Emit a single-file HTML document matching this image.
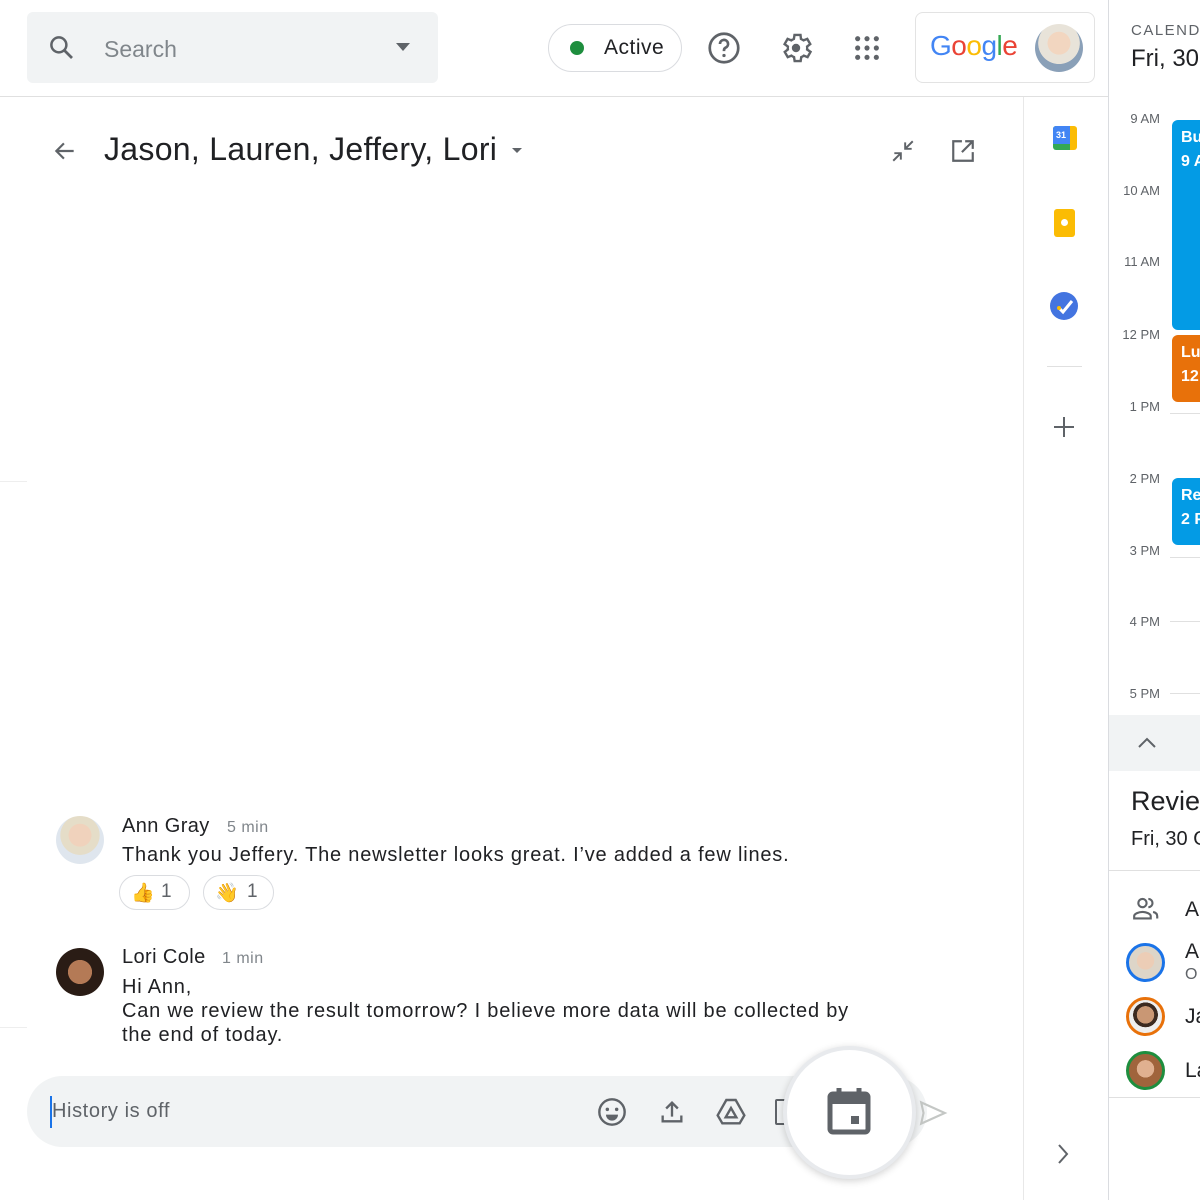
<!DOCTYPE html>
<html><head><meta charset="utf-8"><style>
*{margin:0;padding:0;box-sizing:border-box}
body{width:1200px;height:1200px;overflow:hidden;background:#fff;font-family:"Liberation Sans",Arial,sans-serif;color:#202124;position:relative}
.a{position:absolute}
.t{position:absolute;white-space:nowrap}
.tm{font-size:13px;color:#5f6368;text-align:right;width:60px;left:1100px}
.ev{position:absolute;left:1172px;width:40px;border-radius:6px;color:#fff;font-size:16px;padding:6px 0 0 9px;line-height:24px;font-weight:bold}
.hl{position:absolute;left:1170px;width:30px;height:1px;background:#e0e0e0}
.av{position:absolute;border-radius:50%;overflow:hidden}
.msg{letter-spacing:0.8px}
</style></head><body>
<!-- top bar -->
<div class="a" style="left:27px;top:12px;width:411px;height:71px;background:#f1f3f4;border-radius:6px"></div>
<svg class="a" style="left:47px;top:33px" width="30" height="30" viewBox="0 0 24 24"><circle cx="9.5" cy="9.5" r="6" fill="none" stroke="#5f6368" stroke-width="2"/><path d="M14 14l6 6" stroke="#5f6368" stroke-width="2.2"/></svg>
<div class="t" style="left:104px;top:36px;font-size:23px;color:#80868b">Search</div>
<svg class="a" style="left:395px;top:42px" width="16" height="10"><path d="M1 1h14L8 9z" fill="#5f6368"/></svg>
<div class="a" style="left:548px;top:24px;width:134px;height:48px;border:1px solid #dadce0;border-radius:24px"></div>
<div class="a" style="left:570px;top:41px;width:14px;height:14px;border-radius:50%;background:#1e8e3e"></div>
<div class="t" style="left:604px;top:36px;font-size:21px;color:#202124;letter-spacing:0.5px">Active</div>
<svg class="a" style="left:706px;top:30px" width="36" height="36" viewBox="0 0 24 24"><circle cx="12" cy="12" r="9.5" fill="none" stroke="#5f6368" stroke-width="1.8"/><path d="M9.3 9.3a2.7 2.7 0 1 1 3.7 2.5c-.7.4-1 .9-1 1.7v.6" fill="none" stroke="#5f6368" stroke-width="1.8"/><circle cx="12" cy="17" r="1.1" fill="#5f6368"/></svg>
<svg class="a" style="left:778px;top:30px" width="36" height="36" viewBox="0 0 24 24"><path fill="none" stroke="#5f6368" stroke-width="1.6" d="M19.4 13a7.5 7.5 0 0 0 0-2l2.1-1.6-2-3.5-2.5 1a7 7 0 0 0-1.7-1L15 3.3h-4l-.4 2.6a7 7 0 0 0-1.7 1l-2.5-1-2 3.5L6.6 11a7.5 7.5 0 0 0 0 2l-2.1 1.6 2 3.5 2.5-1a7 7 0 0 0 1.7 1l.4 2.6h4l.4-2.6a7 7 0 0 0 1.7-1l2.5 1 2-3.5z"/><circle cx="12" cy="12" r="2.8" fill="#5f6368"/></svg>
<svg class="a" style="left:853px;top:34px" width="28" height="28" viewBox="0 0 24 24" fill="#5f6368"><circle cx="4" cy="4" r="2.2"/><circle cx="12" cy="4" r="2.2"/><circle cx="20" cy="4" r="2.2"/><circle cx="4" cy="12" r="2.2"/><circle cx="12" cy="12" r="2.2"/><circle cx="20" cy="12" r="2.2"/><circle cx="4" cy="20" r="2.2"/><circle cx="12" cy="20" r="2.2"/><circle cx="20" cy="20" r="2.2"/></svg>
<div class="a" style="left:915px;top:12px;width:180px;height:71px;border:1px solid #e3e3e3;border-radius:8px"></div>
<div class="t" style="left:930px;top:30px;font-size:28px;letter-spacing:-0.5px"><span style="color:#4285f4">G</span><span style="color:#ea4335">o</span><span style="color:#fbbc05">o</span><span style="color:#4285f4">g</span><span style="color:#34a853">l</span><span style="color:#ea4335">e</span></div>
<div class="av" style="left:1035px;top:24px;width:48px;height:48px;background:radial-gradient(circle at 50% 40%,#f2d6c0 0 30%,#e8e3d9 31% 55%,#8aa0b8 56%)"></div>
<div class="a" style="left:0;top:96px;width:1108px;height:1px;background:#e0e0e0"></div>
<div class="a" style="left:1108px;top:0;width:1px;height:1200px;background:#dadce0"></div>
<div class="a" style="left:1023px;top:97px;width:1px;height:1103px;background:#e8e8e8"></div>
<div class="a" style="left:0;top:481px;width:27px;height:1px;background:#eee"></div>
<div class="a" style="left:0;top:1027px;width:27px;height:1px;background:#eee"></div>
<!-- header -->
<svg class="a" style="left:52px;top:138px" width="26" height="26" viewBox="0 0 24 24"><path d="M20 12H5M11 5l-7 7 7 7" fill="none" stroke="#5f6368" stroke-width="2"/></svg>
<div class="t" style="left:104px;top:131px;font-size:32px;color:#202124;letter-spacing:0.3px">Jason, Lauren, Jeffery, Lori</div>
<svg class="a" style="left:511px;top:147px" width="12" height="7"><path d="M1 1h10L6 6z" fill="#5f6368"/></svg>
<svg class="a" style="left:890px;top:138px" width="26" height="26" viewBox="0 0 24 24"><path d="M3 21l7-7M4 14h6v6M21 3l-7 7M14 4v6h6" fill="none" stroke="#5f6368" stroke-width="1.8"/></svg>
<svg class="a" style="left:950px;top:138px" width="26" height="26" viewBox="0 0 24 24"><path d="M11 3H3v18h18v-8M14 3h7v7M21 3l-10 10" fill="none" stroke="#5f6368" stroke-width="2"/></svg>
<!-- side rail -->
<div class="a" style="left:1053px;top:126px;width:24px;height:24px;border-radius:3px;background:linear-gradient(90deg,#34a853 0 70%,#fbbc05 70%)"></div>
<div class="a" style="left:1053px;top:126px;width:17px;height:18px;background:#4285f4;border-radius:3px 0 0 0"></div>
<div class="t" style="left:1056px;top:130px;font-size:9px;color:#fff;font-weight:bold">31</div>
<div class="a" style="left:1054px;top:209px;width:21px;height:28px;background:#fbbc04;border-radius:3px"></div>
<div class="a" style="left:1061px;top:219px;width:7px;height:7px;border-radius:50%;background:#fff"></div>
<div class="a" style="left:1050px;top:292px;width:28px;height:28px;border-radius:50%;background:#4374e0"></div>
<svg class="a" style="left:1050px;top:292px" width="28" height="28"><path d="M9 16l4 4 9-11" fill="none" stroke="#fff" stroke-width="3"/><circle cx="9" cy="16" r="2" fill="#fbbc04"/></svg>
<div class="a" style="left:1047px;top:366px;width:35px;height:1px;background:#e0e0e0"></div>
<svg class="a" style="left:1053px;top:416px" width="22" height="22"><path d="M11 1v20M1 11h20" stroke="#5f6368" stroke-width="2"/></svg>
<svg class="a" style="left:1056px;top:1143px" width="14" height="22"><path d="M3 2l8 9-8 9" fill="none" stroke="#5f6368" stroke-width="2"/></svg>
<!-- calendar -->
<div class="t" style="left:1131px;top:22px;font-size:15px;letter-spacing:1.5px;color:#5f6368">CALENDAR</div>
<div class="t" style="left:1131px;top:45px;font-size:24px;color:#202124">Fri, 30 Oct</div>
<div class="t tm" style="top:111px">9 AM</div>
<div class="t tm" style="top:183px">10 AM</div>
<div class="t tm" style="top:254px">11 AM</div>
<div class="t tm" style="top:327px">12 PM</div>
<div class="t tm" style="top:399px">1 PM</div>
<div class="t tm" style="top:471px">2 PM</div>
<div class="t tm" style="top:543px">3 PM</div>
<div class="t tm" style="top:614px">4 PM</div>
<div class="t tm" style="top:686px">5 PM</div>
<div class="hl" style="top:621px"></div><div class="hl" style="top:693px"></div><div class="hl" style="top:413px"></div><div class="hl" style="top:557px"></div>
<div class="ev" style="top:120px;height:210px;background:#039be5">Bu<br>9 A</div>
<div class="ev" style="top:335px;height:67px;background:#e8710a">Lu<br>12</div>
<div class="ev" style="top:478px;height:67px;background:#039be5">Re<br>2 P</div>
<div class="a" style="left:1109px;top:715px;width:91px;height:56px;background:#f1f3f4"></div>
<svg class="a" style="left:1137px;top:736px" width="20" height="14"><path d="M2 11l8-8 8 8" fill="none" stroke="#5f6368" stroke-width="2"/></svg>
<div class="t" style="left:1131px;top:786px;font-size:27px">Review</div>
<div class="t" style="left:1131px;top:828px;font-size:20px">Fri, 30 Oct</div>
<div class="a" style="left:1109px;top:870px;width:91px;height:1px;background:#e0e0e0"></div>
<svg class="a" style="left:1131px;top:896px" width="30" height="26" viewBox="0 0 24 22"><circle cx="9" cy="6" r="3.5" fill="none" stroke="#5f6368" stroke-width="1.8"/><path d="M2 19v-2c0-2 4-3.5 7-3.5s7 1.5 7 3.5v2z" fill="none" stroke="#5f6368" stroke-width="1.8"/><path d="M14 2.5a3.5 3.5 0 0 1 0 7M18 13.5c2 .5 3.5 1.5 3.5 3.5v2" fill="none" stroke="#5f6368" stroke-width="1.8"/></svg>
<div class="t" style="left:1185px;top:898px;font-size:21px">A</div>
<div class="av" style="left:1126px;top:943px;width:39px;height:39px;border:3px solid #1a73e8;background:radial-gradient(circle at 50% 45%,#eccdb6 0 35%,#ddd5c8 36%)"></div>
<div class="t" style="left:1185px;top:940px;font-size:21px">A</div>
<div class="t" style="left:1185px;top:966px;font-size:16px;color:#5f6368">O</div>
<div class="av" style="left:1126px;top:997px;width:39px;height:39px;border:3px solid #e8710a;background:radial-gradient(circle at 50% 45%,#c99774 0 35%,#3c2a20 36% 50%,#eee 51%)"></div>
<div class="t" style="left:1185px;top:1005px;font-size:21px">Ja</div>
<div class="av" style="left:1126px;top:1051px;width:39px;height:39px;border:3px solid #1e8e3e;background:radial-gradient(circle at 50% 45%,#e0b090 0 35%,#a0643c 36%)"></div>
<div class="t" style="left:1185px;top:1059px;font-size:21px">La</div>
<div class="a" style="left:1109px;top:1097px;width:91px;height:1px;background:#e0e0e0"></div>
<!-- messages -->
<div class="av" style="left:56px;top:816px;width:48px;height:48px;background:radial-gradient(circle at 50% 40%,#f0d2bc 0 30%,#e5ddc8 31% 52%,#dfe6ee 53%)"></div>
<div class="t msg" style="left:122px;top:815px;font-size:20px;letter-spacing:0.4px">Ann Gray</div>
<div class="t" style="left:227px;top:819px;font-size:16px;color:#80868b;letter-spacing:0.5px">5 min</div>
<div class="t msg" style="left:122px;top:844px;font-size:20px;color:#202124">Thank you Jeffery. The newsletter looks great. I’ve added a few lines.</div>
<div class="a" style="left:119px;top:875px;width:71px;height:35px;border:1px solid #dadce0;border-radius:18px"></div>
<div class="t" style="left:131px;top:881px;font-size:19px;color:#f4b400">👍</div><div class="t" style="left:161px;top:881px;font-size:19px;color:#5f6368">1</div>
<div class="a" style="left:203px;top:875px;width:71px;height:35px;border:1px solid #dadce0;border-radius:18px"></div>
<div class="t" style="left:215px;top:881px;font-size:19px;color:#5d4037">👋</div><div class="t" style="left:247px;top:881px;font-size:19px;color:#5f6368">1</div>
<div class="av" style="left:56px;top:948px;width:48px;height:48px;background:radial-gradient(circle at 50% 50%,#b47a56 0 35%,#2a1c15 36%)"></div>
<div class="t" style="left:122px;top:946px;font-size:20px;letter-spacing:0.4px">Lori Cole</div>
<div class="t" style="left:222px;top:950px;font-size:16px;color:#80868b;letter-spacing:0.5px">1 min</div>
<div class="a msg" style="left:122px;top:975px;font-size:20px;line-height:24px;width:740px">Hi Ann,<br>Can we review the result tomorrow? I believe more data will be collected by the end of today.</div>
<!-- composer -->
<div class="a" style="left:27px;top:1076px;width:900px;height:71px;background:#f1f3f4;border-radius:36px"></div>
<div class="a" style="left:50px;top:1096px;width:2px;height:32px;background:#1a73e8"></div>
<div class="t" style="left:52px;top:1100px;font-size:20px;color:#5f6368;letter-spacing:0.6px">History is off</div>
<svg class="a" style="left:596px;top:1096px" width="32" height="32" viewBox="0 0 24 24"><circle cx="12" cy="12" r="9.5" fill="none" stroke="#5f6368" stroke-width="1.8"/><circle cx="8.5" cy="10" r="1.3" fill="#5f6368"/><circle cx="15.5" cy="10" r="1.3" fill="#5f6368"/><path d="M7.5 14h9a4.5 4.5 0 0 1-9 0z" fill="#5f6368"/></svg>
<svg class="a" style="left:658px;top:1098px" width="28" height="28" viewBox="0 0 24 24"><path d="M12 16V4M7 9l5-5 5 5M4 15v5h16v-5" fill="none" stroke="#5f6368" stroke-width="2"/></svg>
<svg class="a" style="left:715px;top:1096px" width="32" height="32" viewBox="0 0 24 24"><path d="M8.5 3h7l6.5 11.5-3.5 6h-13L2 14.5z" fill="none" stroke="#5f6368" stroke-width="1.8"/><path d="M12 9l-4 7h8z" fill="none" stroke="#5f6368" stroke-width="1.8"/></svg>
<div class="a" style="left:775px;top:1099px;width:14px;height:26px;border:2.5px solid #5f6368;border-radius:2px"></div>
<svg class="a" style="left:918px;top:1100px" width="30" height="26" viewBox="0 0 24 22"><path d="M2 2l20 9-20 9 2-9z" fill="none" stroke="#c4c7c5" stroke-width="1.8"/></svg>
<div class="a" style="left:783px;top:1046px;width:133px;height:133px;border-radius:50%;background:#fff;border:4px solid #e8eaed;box-shadow:0 2px 8px rgba(0,0,0,.18)"></div>
<svg class="a" style="left:825px;top:1086px" width="48" height="50" viewBox="0 0 24 25"><path d="M7 1v4M17 1v4" stroke="#5f6368" stroke-width="2.5"/><rect x="2.5" y="4" width="19" height="19" rx="1.5" fill="none" stroke="#5f6368" stroke-width="2.5"/><rect x="2.5" y="4" width="19" height="5" fill="#5f6368"/><rect x="13" y="15" width="4" height="4" fill="#5f6368"/></svg>
</body></html>
